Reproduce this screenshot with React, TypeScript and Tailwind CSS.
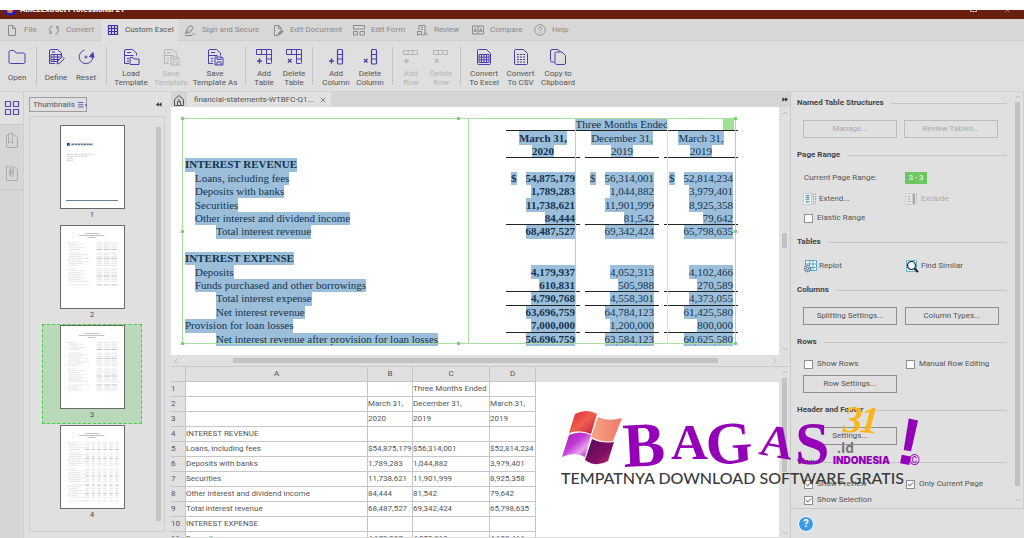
import React from "react";
import { Check, ChevronDown, ChevronLeft, ChevronRight, ChevronUp, X } from "lucide-react";

type IconProps = { children: React.ReactNode; className?: string; box?: string };

function Icon({ children, className = "size-[18px]", box = "0 0 18 18" }: IconProps) {
  return (
    <svg viewBox={box} className={`shrink-0 ${className}`} fill="none" stroke="currentColor" strokeWidth="1" strokeLinejoin="round" aria-hidden="true">
      {children}
    </svg>
  );
}

/* ---------- Menu tabs ---------- */

const menuTabs = [
  { label: "File", width: "w-[42px]", icon: <path d="M2.5 1.5h4l3 3v7h-7zM6.5 1.5v3h3" /> },
  {
    label: "Convert",
    width: "w-[59px]",
    icon: <path d="M4.500 1.800a4.300 4.300 0 0 0-1.500 7.300M3.200 9.400H1.200M3.200 9.400V7.200M7.500 10.200a4.300 4.300 0 0 0 1.500-7.300M8.800 2.600h2M8.800 2.600v2.200" />,
  },
  { label: "Custom Excel", width: "w-[77px]", icon: <path d="M1.500 1.500h9v9h-9zM4.500 1.500v9M7.500 1.500v9M1.500 4.500h9M1.500 7.500h9" strokeWidth="1.200" /> },
  { label: "Sign and Secure", width: "w-[88px]", icon: <path d="M1.500 9.500 3 4.500l4-3 2 2-2.500 4.500zM1.500 9.500l3.500-4M1 11.500h6c2 0 1-2 4-1.500M7 1.500l2 2" /> },
  {
    label: "Edit Document",
    width: "w-[81px]",
    icon: (
      <>
        <path d="M6 11.500H2.500v-10h4l3 3v2M6.500 1.500v3h3" />
        <path d="m6 11 .5-2 3-3 1.500 1.500-3 3z" fill="currentColor" />
      </>
    ),
  },
  { label: "Edit Form", width: "w-[63px]", icon: <path d="M.5 1.500h11v3.500H.5zM.5 7.500h4v3.500h-4zM7 7.500h4.500v3.500H7z" /> },
  { label: "Review", width: "w-[56px]", icon: <path d="M3 6V1.500h6v9.500H6M1.500 7.500h4v3h-3l-1 1zM5 3.500h2M5 5.500h2M9 8l2.500 3" /> },
  { label: "Compare", width: "w-[62px]", icon: <path d="M.5 2h11v8H.5zM6 2v8M2 8l1.200-3.500L4.500 8M2.300 7h2M7.500 8l1.200-3.500L10 8M7.800 7h2" /> },
  {
    label: "Help",
    width: "w-[45px]",
    icon: (
      <>
        <circle cx="6" cy="6" r="5.300" strokeWidth=".8" />
        <path d="M4.500 4.800C4.500 2.700 7.500 2.700 7.500 4.800 7.500 6 6 6 6 7.200M6 8.200v.8" />
      </>
    ),
  },
];

function MenuTabs() {
  return (
    <nav className="flex h-[22px] shrink-0 border-b border-[#d0d0d0] bg-[#d6d7d6]">
      {menuTabs.map((t) => (
        <button
          key={t.label}
          className={`flex shrink-0 items-center gap-[6px] whitespace-nowrap pl-[6px] ${t.width} ${
            t.label === "Custom Excel" ? "-mb-px bg-[#dfdfdf] text-[#555]" : "text-[#8b8b8b]"
          }`}
        >
          <Icon box="0 0 12 12" className={t.label === "Custom Excel" ? "size-3 text-[#3a2fae]" : "size-3"}>
            {t.icon}
          </Icon>
          {t.label}
        </button>
      ))}
    </nav>
  );
}

/* ---------- Toolbar ---------- */

const sheetPage = <path d="M7 15.500H2.500V3a1.500 1.500 0 0 1 1.500-1.500h6.500l4 3.500v2.500M5 4.500h4M2.500 7.500h9M5 10.500h2M5 13h2" />;
const columnCells = <path d="M10.500 2.500a1 1 0 0 1 1-1h3a1 1 0 0 1 1 1v12.500a1 1 0 0 1-1 1h-3a1 1 0 0 1-1-1zM10.500 6.500h5M10.500 11h5" strokeWidth="1.200" />;
const tableCells = <path d="M1.500 6.500v-5h15v13a1 1 0 0 1-1 1h-4v-9zM6.500 1.500v5M11.500 1.500v5M11.500 6.500h5M11.500 11h5" />;
const rowCells = <path d="M1.500 2.500h14v4h-14zM6.200 2.500v4M10.800 2.500v4" />;
const plus = <path d="M4.500 10.500v5M2 13h5" strokeWidth="1.400" />;
const cross = <path d="m3 11 3.500 3.500M6.500 11 3 14.500" strokeWidth="1.300" />;
const csvPage = "M2.500 2.500a1 1 0 0 1 1-1h8l4 4v10a1 1 0 0 1-1 1h-11a1 1 0 0 1-1-1z";

type Tool = { label: string; width: string; icon: React.ReactNode; off?: boolean };

const toolGroups: { pad: string; tools: Tool[] }[] = [
  { pad: "pr-[2px]", tools: [{ label: "Open", width: "w-[34px]", icon: <path d="M1 4a1.500 1.500 0 0 1 1.500-1.500H6L8 5h7.500A1.500 1.500 0 0 1 17 6.500V14a1.500 1.500 0 0 1-1.500 1.500h-13A1.500 1.500 0 0 1 1 14z" /> }] },
  {
    pad: "pl-[4px] pr-[5px]",
    tools: [
      {
        label: "Define",
        width: "w-[30px]",
        icon: (
          <>
            <path d="M8 15.500H2.500V3A1.500 1.500 0 0 1 4 1.500h6.500l4 3.500v3M5 4h3" />
            <path d="M4 6.500h10v3l-3 4H4zM4 9h9M4 11.500h8M7 6.500v7M10.500 6.500v7" />
            <path d="m10 16 .8-2.800 4.500-4.500 2 2-4.500 4.500z" fill="#dfdfdf" />
          </>
        ),
      },
      {
        label: "Reset",
        width: "w-[30px]",
        icon: (
          <>
            <path d="M7.500 2.200A6.800 6.800 0 1 0 15.800 9M9 9h.1" />
            <circle cx="9" cy="9" r="1" />
            <path d="m12.500 8.500 3.300-4 1.200 5z" fill="currentColor" />
          </>
        ),
      },
    ],
  },
  {
    pad: "pl-[4px] pr-[6px]",
    tools: [
      {
        label: "Load\nTemplate",
        width: "w-[40px]",
        icon: (
          <>
            {sheetPage}
            <path d="M8 9.500h3l1 1.500h5v5.500H8z" fill="#dfdfdf" />
          </>
        ),
      },
      {
        label: "Save\nTemplate",
        width: "w-[40px]",
        off: true,
        icon: (
          <>
            {sheetPage}
            <path d="M9 9h7l1 1v7H9zM11 9v2.500h4V9M11 17v-3h4v3" fill="#dfdfdf" />
          </>
        ),
      },
      {
        label: "Save\nTemplate As",
        width: "w-[48px]",
        icon: (
          <>
            {sheetPage}
            <path d="M9 9h7l1 1v7H9zM11 9v2.500h4V9M11 17v-3h4v3" fill="#dfdfdf" />
          </>
        ),
      },
    ],
  },
  {
    pad: "px-[3px]",
    tools: [
      { label: "Add\nTable", width: "w-[30px]", icon: <>{tableCells}{plus}</> },
      { label: "Delete\nTable", width: "w-[30px]", icon: <>{tableCells}{cross}</> },
    ],
  },
  {
    pad: "pl-[6px] pr-[5px]",
    tools: [
      { label: "Add\nColumn", width: "w-[34px]", icon: <>{columnCells}{plus}</> },
      { label: "Delete\nColumn", width: "w-[34px]", icon: <>{columnCells}{cross}</> },
    ],
  },
  {
    pad: "pl-[3px] pr-[4px]",
    tools: [
      { label: "Add\nRow", width: "w-[30px]", off: true, icon: <>{rowCells}{plus}</> },
      { label: "Delete\nRow", width: "w-[30px]", off: true, icon: <>{rowCells}{cross}</> },
    ],
  },
  {
    pad: "pl-[5px]",
    tools: [
      { label: "Convert\nTo Excel", width: "w-[36px]", icon: <path d={`${csvPage}M4 6.500h10v8H4zM4 9.200h10M4 11.800h10M6.500 6.500v8M9 6.500v8M11.500 6.500v8`} /> },
      { label: "Convert\nTo CSV", width: "w-[37px]", icon: <><path d={csvPage} /><path d="M5 6.500h8M5 9h8M5 11.500h8M5 14h8" strokeDasharray="2 1" /></> },
      { label: "Copy to\nClipboard", width: "w-[38px]", icon: <path d="M5 14H3a1.500 1.500 0 0 1-1.500-1.500V3A1.500 1.500 0 0 1 3 1.500h6L11.500 4M6 5.500A1.500 1.500 0 0 1 7.500 4H13l3.500 3.500V15a1.500 1.500 0 0 1-1.500 1.500H7.500A1.500 1.500 0 0 1 6 15z" /> },
    ],
  },
];

function Toolbar() {
  return (
    <div className="flex h-[51px] shrink-0 border-b border-[#d2d2d2] bg-[#dfdfdf] py-[6px]">
      {toolGroups.map((g, i) => (
        <div key={i} className={`flex ${g.pad} ${i < toolGroups.length - 1 ? "border-r border-[#c4c4c4]" : ""}`}>
          {g.tools.map((t) => (
            <button
              key={t.label}
              disabled={t.off}
              className={`flex shrink-0 flex-col items-center gap-[3px] ${t.width} ${t.off ? "text-[#b5b5b5]" : "text-[#555]"}`}
            >
              <Icon className={t.off ? "mt-px size-[18px]" : "mt-px size-[18px] text-[#4b3fae]"}>{t.icon}</Icon>
              <span className="flex flex-1 items-center whitespace-pre text-center leading-[9px]">{t.label}</span>
            </button>
          ))}
        </div>
      ))}
    </div>
  );
}

/* ---------- Left side ---------- */

function Rail() {
  return (
    <div className="w-6 shrink-0 border-r border-[#cfcfcf] bg-[#d6d6d6]">
      <button aria-label="Thumbnails" className="flex h-8 w-[23px] items-center justify-center bg-[#e0e0e0] text-[#5b49b5]">
        <Icon box="0 0 16 16" className="size-4">
          <path d="M1.500 1.500h5v5h-5zM9.500 1.500h5v5h-5zM1.500 9.500h5v5h-5zM9.500 9.500h5v5h-5z" strokeWidth="1.200" />
        </Icon>
      </button>
      <button aria-label="Bookmarks" className="flex h-8 w-[23px] items-center justify-center border-t border-[#c8c8c8] text-[#acacac]">
        <Icon box="0 0 14 18" className="h-[18px] w-[14px]">
          <path d="M3 3.500H1.500v12h11V6L9 2.500H8M3.500 1.500h4v10l-2-2-2 2z" />
        </Icon>
      </button>
      <button aria-label="Attachments" className="flex h-[34px] w-[23px] items-center justify-center border-b border-[#c8c8c8] text-[#acacac]">
        <Icon box="0 0 14 18" className="h-[18px] w-[14px]">
          <path d="M4 2.500H1.500v14h11V6L9 2.500M4.500 6v4c0 3 4 3 4 0V4c0-2-3-2-3 0v6c0 1 1.500 1 1.500 0V5" />
        </Icon>
      </button>
    </div>
  );
}

function PageDrawing({ page }: { page: number }) {
  if (page === 1) {
    return (
      <svg viewBox="0 0 64 83" className="h-full w-full" aria-hidden="true">
        <path d="M6 17h3v3H6z" fill="#26598a" />
        <path d="M10.500 18.500h22" stroke="#5f7896" strokeWidth="1.600" strokeDasharray="3 .6 2 .5" />
        <path d="M6 28.500h27M6 30.500h22M6 33h7M6 35h6" stroke="#bbb" strokeWidth=".7" strokeDasharray="3 .6" />
        <path d="M5 75.500h53" stroke="#6d8298" strokeWidth="1.200" />
      </svg>
    );
  }
  const columns = page === 4 ? [25, 31, 37, 43, 49, 55] : page === 3 ? [36, 44, 51] : [36, 43.5, 51];
  const count = page === 4 ? 34 : page === 3 ? 28 : 25;
  const rows = Array.from({ length: count }, (_, i) => i).filter((i) => i % 9 !== 5);
  return (
    <svg viewBox="0 0 64 83" className="h-full w-full" aria-hidden="true">
      <path d="M24 7.500h15M18 9.500h26M27 11.500h8" stroke="#a5a5a5" strokeWidth=".7" />
      {rows.map((i) => (
        <g key={i} stroke={i % 5 === 4 ? "#a8a8a8" : "#dcdcdc"} strokeWidth=".7">
          <path d={`M${i % 5 ? 8 : 6} ${16.5 + i * 1.8}h${9 + ((i * 7) % 13)}`} stroke="#d6d6d6" strokeDasharray="2 .5" />
          {columns.map((x) => (
            <path key={x} d={`M${x} ${16.5 + i * 1.8}h${page === 4 ? 3.5 : 6}`} />
          ))}
        </g>
      ))}
    </svg>
  );
}

function Sidebar() {
  return (
    <aside className="flex w-[147px] shrink-0 flex-col bg-[#e0e0e0] pb-[6px] pl-[5px] pr-[6px] pt-[5px]">
      <div className="flex h-[19px] shrink-0 items-start justify-between">
        <button className="flex h-[15px] w-[58px] items-center gap-[3px] border border-[#9c9c9c] pl-[3px] text-[#555]">
          Thumbnails
          <Icon box="0 0 9 6" className="h-[6px] w-[9px] text-[#4b3fae]">
            <path d="M0 .5h5.500M0 2.800h5.500M0 5h5.500" strokeWidth=".8" />
            <circle cx="8" cy="3" r=".4" fill="currentColor" />
          </Icon>
        </button>
        <button aria-label="Collapse panel" className="flex h-[15px] items-center pr-[3px] text-[#333]">
          <Icon box="0 0 7 5" className="h-[5px] w-[6px]">
            <path d="M3.200 0v5L0 2.500zM6.500 0v5L3.300 2.500z" fill="currentColor" stroke="none" />
          </Icon>
        </button>
      </div>
      <div className="flex flex-1 justify-between border border-[#cfcfcf] pl-3 pr-[3px] pt-[7px]">
        <div>
          {[1, 2, 3, 4].map((n) => (
            <button
              key={n}
              className={`flex h-[100px] w-[100px] flex-col items-center border text-[#555] ${
                n === 3 ? "border-dashed border-[#45cf45] bg-[#bad9ba]" : "border-transparent"
              }`}
            >
              <span className="block h-[84px] w-[65px] shrink-0 border border-[#6a6a6a] bg-white">
                <PageDrawing page={n} />
              </span>
              <span className="leading-[12px]">{n}</span>
            </button>
          ))}
        </div>
        <div className="mb-[10px] mt-[3px] w-[5px] bg-[#c3c3c3]" />
      </div>
    </aside>
  );
}

/* ---------- Document ---------- */

type Line = { label?: string; indent?: string; head?: boolean; values?: string[]; dollar?: boolean; rule?: boolean };

const statement: Line[] = [
  { label: "INTEREST REVENUE", indent: "pl-0", head: true },
  { label: "Loans, including fees", indent: "pl-[10px]", values: ["54,875,179", "56,314,001", "52,814,234"], dollar: true },
  { label: "Deposits with banks", indent: "pl-[10px]", values: ["1,789,283", "1,044,882", "3,979,401"] },
  { label: "Securities", indent: "pl-[10px]", values: ["11,738,621", "11,901,999", "8,925,358"] },
  { label: "Other interest and dividend income", indent: "pl-[10px]", values: ["84,444", "81,542", "79,642"], rule: true },
  { label: "Total interest revenue", indent: "pl-[31px]", values: ["68,487,527", "69,342,424", "65,798,635"] },
  {},
  { label: "INTEREST EXPENSE", indent: "pl-0", head: true },
  { label: "Deposits", indent: "pl-[10px]", values: ["4,179,937", "4,052,313", "4,102,466"] },
  { label: "Funds purchased and other borrowings", indent: "pl-[10px]", values: ["610,831", "505,988", "270,589"], rule: true },
  { label: "Total interest expense", indent: "pl-[31px]", values: ["4,790,768", "4,558,301", "4,373,055"], rule: true },
  { label: "Net interest revenue", indent: "pl-[31px]", values: ["63,696,759", "64,784,123", "61,425,580"] },
  { label: "Provision for loan losses", indent: "pl-0", values: ["7,000,000", "1,200,000", "800,000"], rule: true },
  { label: "Net interest revenue after provision for loan losses", indent: "pl-[31px]", values: ["56,696,759", "63,584,123", "60,625,580"] },
];

function Mark({ children }: { children: React.ReactNode }) {
  return <span className="flex items-center bg-[#9bbfda] leading-none">{children}</span>;
}

const rowStyle = "flex min-h-0 flex-1";
const ruleStyle = "border-b border-[#222]";

function Statement() {
  return (
    <table className="flex h-[228px] w-[553px] flex-col whitespace-nowrap font-['Liberation_Serif',serif] text-[11px] text-[#15334f]">
      <thead className="contents">
        <tr className={rowStyle}>
          <th className="w-[321px]" />
          <th colSpan={3} className={`flex w-[232px] justify-center font-normal ${ruleStyle}`}>
            <Mark>Three Months Ended</Mark>
          </th>
        </tr>
        <tr className={`${rowStyle} gap-[5px]`}>
          <th className="w-[316px]" />
          <th className="flex w-[74px] justify-center font-bold"><Mark>March 31,</Mark></th>
          <th className="flex w-[74px] justify-center font-normal"><Mark>December 31,</Mark></th>
          <th className="flex w-[74px] justify-center font-normal"><Mark>March 31,</Mark></th>
        </tr>
        <tr className={`${rowStyle} gap-[5px]`}>
          <th className="w-[316px]" />
          <th className={`flex w-[74px] justify-center font-bold ${ruleStyle}`}><Mark>2020</Mark></th>
          <th className={`flex w-[74px] justify-center font-normal ${ruleStyle}`}><Mark>2019</Mark></th>
          <th className={`flex w-[74px] justify-center font-normal ${ruleStyle}`}><Mark>2019</Mark></th>
        </tr>
      </thead>
      <tbody className="contents">
        {statement.map((line, i) => (
          <tr key={i} className={`${rowStyle} gap-[5px]`}>
            <td className={`flex w-[316px] ${line.indent ?? ""} ${line.head ? "font-bold" : ""}`}>
              {line.label && <Mark>{line.label}</Mark>}
            </td>
            {(line.values ?? []).map((v, c) => (
              <td key={c} className={`flex w-[74px] px-[5px] ${line.rule ? ruleStyle : ""} ${c === 0 ? "font-bold" : ""}`}>
                {line.dollar && <Mark>$</Mark>}
                <span className="ml-auto flex"><Mark>{v}</Mark></span>
              </td>
            ))}
          </tr>
        ))}
      </tbody>
    </table>
  );
}

const handles = [
  "-left-[2px] -top-[2px]",
  "left-[274px] -top-[2px]",
  "-right-[2px] -top-[2px]",
  "-left-[2px] top-[111px]",
  "-right-[2px] top-[111px]",
  "-left-[2px] -bottom-[2px]",
  "left-[274px] -bottom-[2px]",
  "-right-[2px] -bottom-[2px]",
];

function SelectionFrame() {
  return (
    <div className="pointer-events-none absolute left-[11px] top-[11px] h-[226px] w-[554px] border border-[#a9dfa2]">
      <div className="absolute inset-y-0 left-[285px] w-px bg-[#a9dfa2]" />
      <div className="absolute inset-y-0 left-[392px] w-px bg-[#a9dfa2]" />
      <div className="absolute inset-y-0 left-[484px] w-px bg-[#cfeccb]" />
      <div className="absolute right-px top-0 size-[11px] bg-[#9fe096]" />
      {handles.map((h) => (
        <div key={h} className={`absolute size-[3px] bg-[#72d66c] ${h}`} />
      ))}
    </div>
  );
}

const arrow = "size-2 shrink-0 text-[#aaa]";

function DocumentView() {
  return (
    <section className="flex h-[274px] shrink-0 flex-col">
      <div className="flex h-[15px] shrink-0 items-stretch justify-between bg-[#d5d5d5]">
        <div className="flex">
          <button aria-label="Home" className="flex w-4 items-center justify-center text-[#555]">
            <Icon box="0 0 12 12" className="size-3">
              <path d="M1.500 5.500 6 1.500l4.500 4v6h-9zM4.500 11.500V7.500h3v4M5 6h2" />
            </Icon>
          </button>
          <div className="flex w-[144px] items-center justify-between bg-[#e1e1e1] pl-[7px] pr-1 text-[#555]">
            financial-statements-WTBFC-Q1...
            <button aria-label="Close tab"><X className="size-2" /></button>
          </div>
        </div>
        <button aria-label="Collapse settings" className="flex items-center pr-[2px] text-[#333]">
          <Icon box="0 0 7 5" className="h-[5px] w-[6px]">
            <path d="M.5 0v5l3.200-2.500zM3.700 0v5L7 2.500z" fill="currentColor" stroke="none" />
          </Icon>
        </button>
      </div>
      <div className="flex flex-1">
        <div className="relative flex-1 bg-white pl-[14px] pt-[11px]">
          <Statement />
          <SelectionFrame />
        </div>
        <div className="flex w-[11px] flex-col items-center justify-between bg-[#e0e0e0] py-[2px]">
          <ChevronUp className={arrow} />
          <div className="mt-[18px] h-[15px] w-[5px] bg-[#c3c3c3]" />
          <ChevronDown className={arrow} />
        </div>
      </div>
      <div className="flex h-[11px] items-center bg-[#e0e0e0] pl-px pr-[11px]">
        <ChevronLeft className={arrow} />
        <div className="flex-1 pl-[53px] pr-[53px]"><div className="h-[5px] bg-[#c3c3c3]" /></div>
        <ChevronRight className={arrow} />
      </div>
    </section>
  );
}

/* ---------- Spreadsheet ---------- */

const cells: string[][] = [
  ["", "", "Three Months Ended", ""],
  ["", "March 31,", "December 31,", "March 31,"],
  ["", "2020", "2019", "2019"],
  ["INTEREST REVENUE", "", "", ""],
  ["Loans, including fees", "$54,875,179", "$56,314,001", "$52,814,234"],
  ["Deposits with banks", "1,789,283", "1,044,882", "3,979,401"],
  ["Securities", "11,738,621", "11,901,999", "8,925,358"],
  ["Other interest and dividend income", "84,444", "81,542", "79,642"],
  ["Total interest revenue", "68,487,527", "69,342,424", "65,798,635"],
  ["INTEREST EXPENSE", "", "", ""],
  ["Deposits", "4,179,937", "4,052,313", "4,102,466"],
];

function Sheet() {
  const th = "border-r border-b border-[#c6c6c6] bg-[#e0e0e0] p-0 font-normal";
  return (
    <section className="flex min-h-0 flex-1 border-t border-[#c9c9c9]">
      <div className="min-h-0 flex-1 overflow-hidden border-b border-[#d8d8d8] bg-white">
        <table className="w-full table-fixed border-separate border-spacing-0 whitespace-nowrap text-[#555]">
          <colgroup>
            <col className="w-[15px]" />
            <col className="w-[182px]" />
            <col className="w-[45px]" />
            <col className="w-[77px]" />
            <col className="w-[46px]" />
            <col />
          </colgroup>
          <thead>
            <tr className="h-[15px]">
              <th className={th} />
              {["A", "B", "C", "D"].map((c) => <th key={c} className={th}>{c}</th>)}
              <th className="bg-[#e0e0e0] p-0" />
            </tr>
          </thead>
          <tbody>
            {cells.map((row, i) => (
              <tr key={i} className="h-[15px]">
                <th className={`${th} text-left`}>{i + 1}</th>
                {row.map((c, j) => <td key={j} className="border-b border-r border-[#c6c6c6] p-0">{c}</td>)}
                <td className="p-0" />
              </tr>
            ))}
          </tbody>
        </table>
      </div>
      <div className="flex w-[11px] flex-col items-center bg-[#e0e0e0] py-px">
        <ChevronUp className={arrow} />
        <div className="mt-[2px] h-[94px] w-[5px] bg-[#c3c3c3]" />
        <ChevronDown className={`${arrow} mt-auto`} />
      </div>
    </section>
  );
}

/* ---------- Settings panel ---------- */

function Group({ title, children }: { title: string; children: React.ReactNode }) {
  return (
    <section className="pb-2">
      <h2 className="flex h-4 items-center gap-[7px] font-bold text-[#444]">
        {title}
        <span className="h-px flex-1 bg-[#c6c6c6]" />
      </h2>
      {children}
    </section>
  );
}

function PushButton({ children, off = false }: { children: React.ReactNode; off?: boolean }) {
  return (
    <button disabled={off} className={`h-[18px] w-[94px] border ${off ? "border-[#bcbcbc] text-[#aaa]" : "border-[#8e8e8e] text-[#555]"}`}>
      {children}
    </button>
  );
}

function Tick({ label, on = false }: { label: string; on?: boolean }) {
  return (
    <label className="relative flex h-4 w-[102px] items-center gap-1 whitespace-nowrap pl-px">
      <input type="checkbox" defaultChecked={on} className="peer size-[9px] appearance-none border border-[#8e8e8e] bg-white" />
      <Check className="invisible absolute left-[2px] size-[7px] stroke-[3] text-[#333] peer-checked:visible" />
      {label}
    </label>
  );
}

const pair = "flex pl-[6px]";

function SettingsPanel() {
  return (
    <aside className="flex w-[234px] shrink-0 flex-col border-l border-[#cacaca] bg-[#e0e0e0] text-[#555]">
      <div className="flex h-[417px] shrink-0 border-b border-[#cacaca]">
        <div className="min-w-0 flex-1 pl-[6px] pt-[3px]">
          <Group title="Named Table Structures">
            <div className={`${pair} gap-[7px] pb-px pt-[9px]`}>
              <PushButton off>Manage...</PushButton>
              <PushButton off>Review Tables...</PushButton>
            </div>
          </Group>
          <Group title="Page Range">
            <div className={`${pair} pt-[9px]`}>
              <span className="w-[102px] pl-px leading-[12px]">Current Page Range:</span>
              <span className="h-[12px] w-[22px] bg-[#69c963] text-center leading-[12px] text-white">3 - 3</span>
            </div>
            <div className={`${pair} pt-[7px]`}>
              <button className="flex h-4 w-[102px] items-center gap-[2px]">
                <Icon box="0 0 14 14" className="size-[14px] text-[#6f9fb5]">
                  <path d="M.5 1.500h8v11h-8z" fill="#fff" stroke="#bccbd2" />
                  <path d="M2.500 3.500h4M2.500 5.500h4M2.500 7.500h4M2.500 10h4" strokeWidth="1.300" />
                  <path d="M10.500 1.500v11M12.500 1.500v11" stroke="#aaa" strokeDasharray="1.500 1" />
                </Icon>
                Extend...
              </button>
              <button disabled className="flex h-4 items-center gap-[2px] text-[#aaa]">
                <Icon box="0 0 14 14" className="size-[14px]">
                  <path d="M.5 1.500h7v11h-7z" fill="#e8e8e8" stroke="#ccc" />
                  <path d="M2.500 4.500h3M2.500 7h3M2.500 9.500h3" />
                  <path d="M9 1.500v11" strokeWidth="2" />
                  <path d="M11.500 1.500v11" stroke="#bbb" strokeDasharray="1.500 1" />
                </Icon>
                Exclude
              </button>
            </div>
            <div className={`${pair} pt-[3px]`}><Tick label="Elastic Range" /></div>
          </Group>
          <Group title="Tables">
            <div className={`${pair} pt-[8px]`}>
              <button className="flex h-4 w-[102px] items-center gap-[2px]">
                <Icon box="0 0 14 14" className="size-[14px] text-[#5aa7cf]">
                  <path d="M2.500 1.500h11v10h-11zM6.500 1.500v10M10 1.500v10M2.500 5h11M2.500 8.500h11" fill="#eef8fc" />
                  <circle cx="4.500" cy="9.500" r="3" fill="#e0e0e0" stroke="#59748c" strokeWidth="1.400" strokeDasharray="1.500 .6" />
                  <circle cx="4.500" cy="9.500" r="1.200" stroke="#59748c" />
                </Icon>
                Replot
              </button>
              <button className="flex h-4 items-center gap-[2px]">
                <Icon box="0 0 14 14" className="size-[14px] text-[#63b3da]">
                  <path d="M1.500 1.500h10v11h-10z" fill="#f4fafc" />
                  <circle cx="6.500" cy="6.500" r="4" stroke="#222" strokeWidth="1.200" />
                  <path d="m9.500 9.500 3.500 3.500" stroke="#222" strokeWidth="2" />
                </Icon>
                Find Similar
              </button>
            </div>
          </Group>
          <Group title="Columns">
            <div className={`${pair} gap-[8px] pb-px pt-[9px]`}>
              <PushButton>Splitting Settings...</PushButton>
              <PushButton>Column Types...</PushButton>
            </div>
          </Group>
          <Group title="Rows">
            <div className={`${pair} pt-[6px]`}>
              <Tick label="Show Rows" />
              <Tick label="Manual Row Editing" />
            </div>
            <div className={`${pair} pb-px pt-[3px]`}><PushButton>Row Settings...</PushButton></div>
          </Group>
          <Group title="Header and Footer">
            <div className={`${pair} pb-px pt-[9px]`}><PushButton>Settings...</PushButton></div>
          </Group>
          <Group title="View">
            <div className={`${pair} pt-[6px]`}>
              <Tick label="Show Preview" on />
              <Tick label="Only Current Page" on />
            </div>
            <div className={pair}><Tick label="Show Selection" on /></div>
          </Group>
        </div>
        <div className="flex w-[17px] flex-col items-center border-r border-[#cfcfcf] pl-[5px] pt-px">
          <ChevronUp className={arrow} />
          <div className="mt-px h-[384px] w-[5px] bg-[#c0c0c0]" />
          <ChevronDown className={`${arrow} mt-[10px]`} />
        </div>
      </div>
      <div className="flex flex-1 items-center pl-[7px]">
        <button aria-label="Help" className="flex size-4 items-center justify-center rounded-full border border-white bg-[#3a9be8] text-[11px] font-bold leading-none text-white">?</button>
      </div>
    </aside>
  );
}

/* ---------- Watermark ---------- */

function Watermark() {
  return (
    <div className="pointer-events-none absolute left-[556px] top-[400px]">
      <svg viewBox="0 0 370 92" className="h-[92px] w-[370px]" aria-label="Bagas31.id Indonesia">
        <defs>
          <linearGradient id="red" x1="0" y1="0" x2="1" y2="1"><stop stopColor="#d8203c" /><stop offset=".5" stopColor="#f0604a" /><stop offset="1" stopColor="#c01848" /></linearGradient>
          <linearGradient id="peach" x1="0" y1="0" x2="1" y2="0"><stop stopColor="#f9a585" /><stop offset="1" stopColor="#ee7a68" /></linearGradient>
          <linearGradient id="violet" x1="0" y1="0" x2="1" y2="1"><stop stopColor="#a31bb8" /><stop offset=".45" stopColor="#c43bd6" /><stop offset=".7" stopColor="#e9a0ee" /><stop offset="1" stopColor="#8a1a96" /></linearGradient>
          <linearGradient id="plum" x1="0" y1="0" x2="1" y2="1"><stop stopColor="#5a0a5c" /><stop offset=".6" stopColor="#7c0f63" /><stop offset="1" stopColor="#c03078" /></linearGradient>
        </defs>
        <path d="M19 14q12-6 22 0l-6 20q-11-5-22-1z" fill="url(#red)" />
        <path d="M43 18q9 5 24 1l-9 23q-11 2-22-4z" fill="url(#peach)" transform="translate(-1 -1)" />
        <path d="M12 36q11-5 22 0l-6 22q-10-6-23 0z" fill="url(#violet)" transform="translate(1 -1)" />
        <path d="M36 38q10 5 22 3l-6 19q-12 7-23-1z" fill="url(#plum)" transform="translate(0 1)" />
        <g fill="#9400b8" className="font-['Liberation_Serif',serif] font-bold">
          <text x="68" y="67" fontSize="63" transform="rotate(-3 68 67)">B</text>
          <text x="115" y="59" fontSize="51">A</text>
          <text x="151" y="65" fontSize="60" transform="rotate(-4 151 65)">G</text>
          <text x="202" y="54" fontSize="46" transform="rotate(10 202 54)">A</text>
          <text x="239" y="64" fontSize="62">S</text>
        </g>
        <g fill="#fdb517" fontSize="38" className="font-['Liberation_Serif',serif] font-bold italic">
          <text x="287" y="32" transform="rotate(2 287 32)">3</text>
          <text x="303" y="32" transform="rotate(5 303 32)">1</text>
        </g>
        <text x="281" y="53" fontSize="14" fill="#777" className="font-['Open_Sans',sans-serif] font-bold">.id</text>
        <text x="277" y="64" fontSize="10" fill="#9400b8" className="font-[Inter,sans-serif] font-black">INDONESIA</text>
        <text x="338" y="62" fontSize="66" fill="#9400b8" transform="rotate(11 338 62)" className="font-['Liberation_Sans',sans-serif] font-bold">!</text>
        <text x="353" y="65" fontSize="14" fill="#9400b8" className="font-[Roboto,sans-serif]">©</text>
      </svg>
      <p className="-mt-[23px] whitespace-nowrap pl-[5px] font-[Lato,sans-serif] text-[16px] font-medium leading-[18px] text-[#3a3a3a]">
        TEMPATNYA DOWNLOAD SOFTWARE GRATIS
      </p>
    </div>
  );
}

/* ---------- Window ---------- */

function TitleBar() {
  return (
    <header className="flex h-[9px] shrink-0 items-start justify-between overflow-hidden bg-[#681f10] px-[5px]">
      <div className="flex h-0 items-center gap-[5px] font-bold text-white">
        <Icon box="0 0 10 10" className="size-[10px]">
          <path d="M0 0h10v8a2 2 0 0 1-2 2H2a2 2 0 0 1-2-2z" fill="#1f23c8" stroke="none" />
          <circle cx="5" cy="5" r="3" fill="#ff8b2e" stroke="none" />
        </Icon>
        Able2Extract Professional 21
      </div>
      <div className="flex h-0 items-center gap-[26px] pr-2 text-[#c9aca5]">
        <span className="h-[4px] w-[7px] border border-current" />
        <X className="size-[8px]" />
      </div>
    </header>
  );
}

export default function App() {
  return (
    <div className="relative flex h-screen flex-col overflow-hidden bg-white pt-[10px] font-[Roboto,sans-serif] text-[8px] leading-[10px]">
      <TitleBar />
      <MenuTabs />
      <Toolbar />
      <main className="flex min-h-0 flex-1">
        <Rail />
        <Sidebar />
        <div className="flex min-w-0 flex-1 flex-col">
          <DocumentView />
          <Sheet />
        </div>
        <SettingsPanel />
      </main>
      <Watermark />
    </div>
  );
}
